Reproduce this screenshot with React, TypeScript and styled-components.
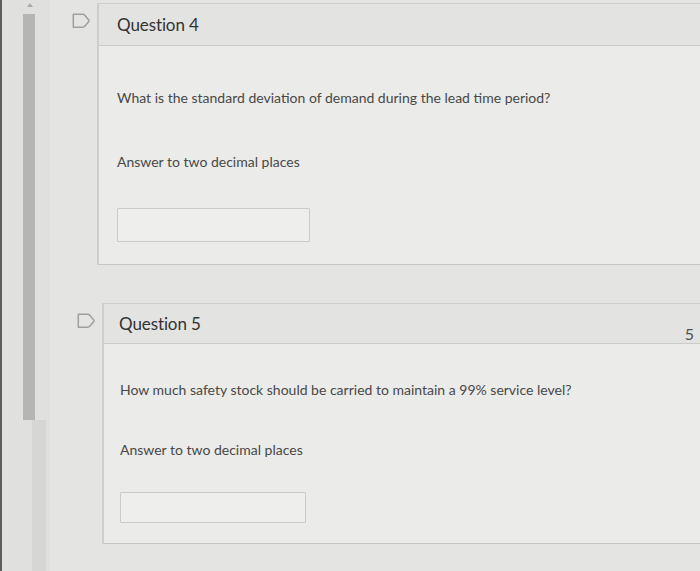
import React from "react";
import styled, { createGlobalStyle } from "styled-components";

const Global = createGlobalStyle`
  html, body { margin: 0; padding: 0; background: #e3e3e1; }
  body { font-family: Lato, "Open Sans", "Liberation Sans", sans-serif; overflow: hidden; }
  #root { width: 700px; height: 571px; }
`;

const Page = styled.div`
  display: flex;
  width: 700px;
  height: 571px;
  overflow: hidden;
  background: #e4e4e2;
`;

const Edge = styled.div`
  width: 2px;
  background: #5e5e5e;
  flex-shrink: 0;
`;

const Rail = styled.div`
  width: 48px;
  flex-shrink: 0;
  background: #e0e0de;
  display: flex;
  flex-direction: column;
  align-items: flex-start;
  padding-left: 21px;
  box-sizing: border-box;
`;

const ArrowUp = styled.div`
  width: 0;
  height: 0;
  margin: 3px 0 0 4px;
  border-left: 3px solid transparent;
  border-right: 3px solid transparent;
  border-bottom: 4px solid #a9a9a9;
`;

const Thumb = styled.div`
  width: 12px;
  height: 406px;
  margin-top: 7px;
  background: #b5b5b4;
`;

const Track = styled.div`
  flex: 1;
  width: 14px;
  margin-left: 9px;
  background: #d6d6d4;
`;

const Content = styled.div`
  flex: 1;
  display: flex;
  flex-direction: column;
  gap: 38px;
  padding-top: 3px;
`;

const QuestionRow = styled.div<{ $shift: number }>`
  display: grid;
  grid-template-columns: ${(p) => 48 + p.$shift}px 1fr;
`;

const FlagCell = styled.div<{ $shift: number }>`
  padding: 10px 0 0 ${(p) => 23 + p.$shift}px;
  border-right: 1px solid #cdcdcb;
`;

const Card = styled.section`
  background: #ebebe9;
  border-top: 1px solid #cfcfcd;
  border-bottom: 1px solid #c6c6c4;
  border-left: 1px solid #cfcfcd;
`;

const Header = styled.header<{ $compact: boolean }>`
  height: ${(p) => (p.$compact ? 39 : 41)}px;
  display: flex;
  align-items: center;
  justify-content: space-between;
  padding: 0 6px 0 ${(p) => (p.$compact ? 15 : 18)}px;
  background: #e3e3e1;
  border-bottom: 1px solid #cacac8;
`;

const Title = styled.h2`
  margin: 0;
  font-size: 17px;
  font-weight: 400;
  color: #333333;
  letter-spacing: -0.1px;
`;

const Points = styled.span`
  font-size: 16px;
  color: #505050;
  margin-top: 20px;
`;

const Body = styled.div<{ $compact: boolean }>`
  display: flex;
  flex-direction: column;
  align-items: flex-start;
  padding: ${(p) => (p.$compact ? "36px 0 20px 16px" : "42px 0 22px 18px")};
`;

const Text = styled.p<{ $gap?: number }>`
  margin: ${(p) => p.$gap ?? 0}px 0 0;
  font-size: 14px;
  line-height: 20px;
  color: #484848;
`;

const AnswerInput = styled.div<{ $compact: boolean }>`
  margin-top: ${(p) => (p.$compact ? 32 : 36)}px;
  width: ${(p) => (p.$compact ? 184 : 191)}px;
  height: ${(p) => (p.$compact ? 29 : 32)}px;
  background: #eeeeec;
  border: 1px solid #cbcbc9;
  border-radius: 1px;
`;

const FlagIcon = () => (
  <svg width="19" height="16" viewBox="0 0 19 16" fill="none">
    <path
      d="M1.3 1.3 H10.5 Q12 1.3 13 2.5 L16.8 7 Q17.3 7.75 16.8 8.5 L13 13 Q12 14.2 10.5 14.2 H1.3 Z"
      stroke="#9f9f9f"
      strokeWidth="1.5"
      strokeLinejoin="round"
    />
  </svg>
);

type Q = { n: number; text: string; points?: string; compact: boolean; shift: number };

const questions: Q[] = [
  {
    n: 4,
    text: "What is the standard deviation of demand during the lead time period?",
    compact: false,
    shift: 0,
  },
  {
    n: 5,
    text: "How much safety stock should be carried to maintain a 99% service level?",
    points: "5",
    compact: true,
    shift: 5,
  },
];

export default function App() {
  return (
    <>
      <Global />
      <Page>
        <Edge />
        <Rail>
          <ArrowUp />
          <Thumb />
          <Track />
        </Rail>
        <Content>
          {questions.map((q) => (
            <QuestionRow key={q.n} $shift={q.shift}>
              <FlagCell $shift={q.shift - 1}>
                <FlagIcon />
              </FlagCell>
              <Card>
                <Header $compact={q.compact}>
                  <Title>Question {q.n}</Title>
                  {q.points && <Points>{q.points}</Points>}
                </Header>
                <Body $compact={q.compact}>
                  <Text>{q.text}</Text>
                  <Text $gap={q.compact ? 40 : 44}>Answer to two decimal places</Text>
                  <AnswerInput $compact={q.compact} />
                </Body>
              </Card>
            </QuestionRow>
          ))}
        </Content>
      </Page>
    </>
  );
}
